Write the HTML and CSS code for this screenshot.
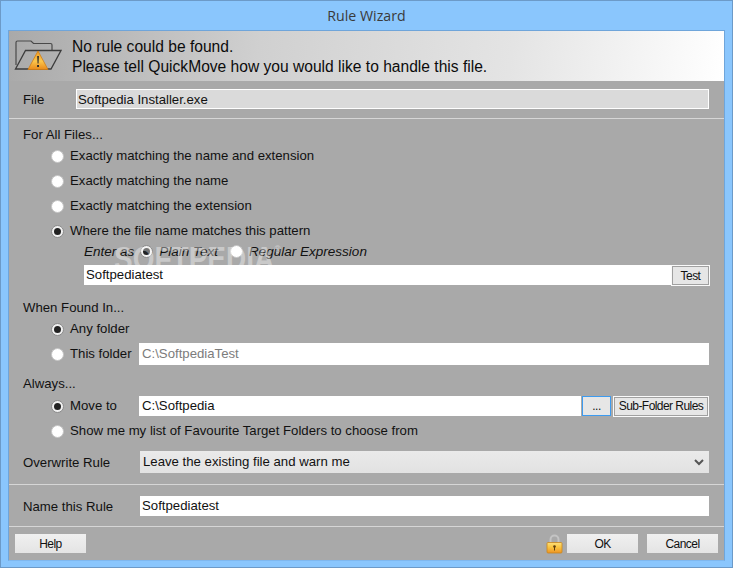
FILE: index.html
```html
<!DOCTYPE html>
<html lang="en">
<head>
<meta charset="utf-8">
<title>Rule Wizard</title>
<link rel="stylesheet" href="styles.css">
</head>
<body>
<div class="window">
  <div class="titlebar">Rule Wizard</div>
  <div class="client">
    <header class="banner">
      <svg class="folder" width="48" height="36" viewBox="0 0 48 36">
        <defs>
          <linearGradient id="warn" x1="0" y1="0" x2="0" y2="1">
            <stop offset="0" stop-color="#ee9a22"/>
            <stop offset=".55" stop-color="#fbc64c"/>
            <stop offset="1" stop-color="#e98a1c"/>
          </linearGradient>
        </defs>
        <path d="M2 27V4.500q0-1.500 1.500-1.500H17l2.500 2.500H36.500q1.500 0 1.500 1.500v5" fill="none" stroke="#4a4a4a" stroke-width="1.200"/>
        <path d="M1.500 31 11.500 12.500H47L37 31Z" fill="none" stroke="#3c3c3c" stroke-width="1.300"/>
        <path d="M24 13 34 31.500H14Z" fill="url(#warn)" stroke="#d07f16" stroke-width=".8"/>
        <path d="M23.200 18h1.700l-.4 7.500h-.9ZM23.100 27h1.900v2h-1.900Z" fill="#2a2a2a"/>
      </svg>
      <div class="banner-text">
        <div>No rule could be found.</div>
        <div>Please tell QuickMove how you would like to handle this file.</div>
      </div>
    </header>

    <section class="row file-row">
      <span class="label label-file">File</span>
      <div class="field field-ro grow">Softpedia Installer.exe</div>
    </section>
    <hr class="sep sep-file">

    <div class="heading heading-first">For All Files...</div>
    <div class="choice choice-a"><span class="radio"></span>Exactly matching the name and extension</div>
    <div class="choice choice-b"><span class="radio"></span>Exactly matching the name</div>
    <div class="choice choice-b"><span class="radio"></span>Exactly matching the extension</div>
    <div class="choice choice-b"><span class="radio on"></span>Where the file name matches this pattern</div>
    <div class="enter-as">
      <span class="em em-lead">Enter as</span>
      <span class="radio on"></span><span class="em em-plain">Plain Text</span>
      <span class="radio"></span><span class="em">Regular Expression</span>
    </div>
    <div class="pattern-row">
      <div class="field grow">Softpediatest</div>
      <div class="btn btn-test">Test</div>
    </div>

    <div class="heading heading-found">When Found In...</div>
    <div class="choice choice-c"><span class="radio on"></span>Any folder</div>
    <div class="choice choice-d">
      <span class="radio"></span><span class="inline-label">This folder</span>
      <div class="field field-dis grow">C:\SoftpediaTest</div>
    </div>

    <div class="heading heading-always">Always...</div>
    <div class="choice choice-e">
      <span class="radio on"></span><span class="inline-label">Move to</span>
      <div class="field field-move grow">C:\Softpedia</div>
      <div class="btn btn-dots">...</div>
      <div class="btn btn-sub">Sub-Folder Rules</div>
    </div>
    <div class="choice choice-f"><span class="radio"></span>Show me my list of Favourite Target Folders to choose from</div>

    <section class="row over-row">
      <span class="label label-wide">Overwrite Rule</span>
      <div class="select grow">Leave the existing file and warn me
        <svg class="chev" width="10" height="7" viewBox="0 0 10 7"><path d="M1 1l4 4 4-4" fill="none" stroke="#555" stroke-width="2"/></svg>
      </div>
    </section>
    <hr class="sep sep-over">
    <section class="row name-row">
      <span class="label label-wide">Name this Rule</span>
      <div class="field grow">Softpediatest</div>
    </section>
    <hr class="sep sep-name">

    <footer class="footer">
      <div class="btn btn-foot">Help</div>
      <div class="spacer"></div>
      <svg class="lock" width="17" height="20" viewBox="0 0 17 20">
        <defs>
          <linearGradient id="lockbody" x1="0" y1="0" x2="0" y2="1">
            <stop offset="0" stop-color="#fde07a"/>
            <stop offset=".45" stop-color="#f9c440"/>
            <stop offset="1" stop-color="#ee9322"/>
          </linearGradient>
        </defs>
        <path d="M4.500 9V5.500a4 4 0 0 1 8 0V9" fill="none" stroke="#c4c4c4" stroke-width="2"/>
        <rect x="1" y="8.500" width="15" height="10.500" rx="1" fill="url(#lockbody)" stroke="#c9851c" stroke-width=".8"/>
        <circle cx="8.500" cy="12.500" r="1.300" fill="#5d3d0d"/>
        <path d="M8 13h1v3.500H8Z" fill="#5d3d0d"/>
      </svg>
      <div class="btn btn-foot">OK</div>
      <div class="btn btn-foot btn-cancel">Cancel</div>
    </footer>
    <div class="watermark">SOFTPEDIA<span class="reg">®</span></div>
  </div>
</div>
</body>
</html>
```

FILE: styles.css
```css
* { box-sizing: border-box; }
html, body { margin: 0; height: 100%; }
body { font-family: "Liberation Sans", Arial, sans-serif; font-size: 13.2px; color: #111; overflow: hidden; }

.window { width: 733px; height: 568px; background: #8ac6fd; border: 1px solid #6c9ac8; padding: 0 7px 6px; display: flex; flex-direction: column; }
.titlebar { height: 29px; line-height: 29px; text-align: center; font-family: "Open Sans", "Liberation Sans", sans-serif; font-size: 14.2px; color: #3a3a3a; flex: none; }
.client { position: relative; flex: 1; background: #a9a9a9; border: 1px solid #6fa5da; border-bottom-color: #7fb7ee; overflow: hidden; }

.banner { height: 50px; display: flex; align-items: center; background: linear-gradient(98deg, #a9a9a9 0%, #d0d0d0 35%, #e4e4e4 70%, #ffffff 100%); padding-left: 5px; }
.folder { flex: none; margin-right: 10px; }
.banner-text { font-size: 15.6px; line-height: 20px; color: #0c0c0c; padding-top: 1px; }

.row { display: flex; align-items: center; padding: 0 15px 0 14px; }
.grow { flex: 1; min-width: 0; }
.label { flex: none; }
.label-file { width: 53px; }
.label-wide { width: 117px; }
.file-row { margin-top: 8px; height: 20px; }
.field { height: 20px; line-height: 20px; background: #fff; padding-left: 2px; white-space: nowrap; overflow: hidden; }
.field-ro { background: #dadada; border: 1px solid #fff; line-height: 19px; padding-left: 1px; }
.field-dis { color: #7c7c7c; height: 22px; line-height: 21px; padding-left: 3px; }
.field-move { padding-left: 3px; }

.sep { border: 0; height: 1px; background: #d6d6d6; margin: 0; }
.sep-file { margin-top: 9px; }

.heading { height: 16px; line-height: 16px; padding-left: 14px; }
.heading-first { margin-top: 8px; }
.heading-found { margin-top: 15px; }
.heading-always { margin-top: 11px; }

.choice { display: flex; align-items: center; height: 16px; line-height: 16px; padding-left: 42px; padding-right: 15px; }
.choice-a { margin-top: 5px; }
.choice-b { margin-top: 9px; }
.choice-c { margin-top: 5px; }
.choice-d { margin-top: 6px; height: 22px; }
.choice-e { margin-top: 4px; height: 20px; }
.choice-f { margin-top: 7px; }

.radio { flex: none; width: 13px; height: 13px; border-radius: 50%; background: #fff; border: 1px solid #c4c4c4; margin-right: 6px; position: relative; }
.radio.on { background: #f0f0f0; border-color: #8a8a8a; }
.radio.on::after { content: ""; position: absolute; left: 2px; top: 2px; width: 7px; height: 7px; border-radius: 50%; background: #222; }

.enter-as { display: flex; align-items: center; height: 16px; margin-top: 4px; padding-left: 75px; }
.em { font-style: italic; font-size: 13.5px; }
.em-lead { margin-right: 6px; }
.em-plain { margin-right: 12px; }

.pattern-row { display: flex; margin-top: 6px; height: 20px; padding: 0 15px 0 75px; }
.inline-label { flex: none; width: 69px; }

.btn { flex: none; display: flex; align-items: center; justify-content: center; height: 20px; font-size: 12px; letter-spacing: -.55px; background: linear-gradient(#f0f0f0, #e4e4e4); color: #111; }
.btn-test, .btn-sub { border: 1px solid #fafafa; outline: 1px solid #a0a0a0; outline-offset: -2px; background: #e6e6e6; }
.btn-test { width: 39px; margin-right: -1px; height: 21px; }
.btn-dots { width: 29px; margin-left: 1px; border: 1px solid #3d9bf0; background: #e6e6e6; align-items: flex-end; padding-bottom: 1px; }
.btn-sub { width: 96px; margin-left: 2px; height: 21px; }

.over-row { margin-top: 12px; height: 22px; }
.select { height: 22px; line-height: 22px; padding-left: 3px; padding-right: 3px; background: linear-gradient(#eaeaea, #e2e2e2); display: flex; justify-content: space-between; align-items: center; }
.chev { margin-right: 2px; }
.sep-over { margin-top: 11px; }
.name-row { margin-top: 11px; height: 20px; }
.sep-name { margin-top: 10px; }

.footer { display: flex; align-items: center; margin-top: 7px; padding: 0 6px; height: 19px; }
.spacer { flex: 1; }
.btn-foot { width: 71px; height: 19px; }
.btn-cancel { margin-left: 9px; }
.lock { flex: none; margin-right: 4px; }

.watermark { position: absolute; left: 105px; top: 204px; line-height: 30px; font-weight: 700; font-size: 28px; color: rgba(255,255,255,.38); pointer-events: none; transform: scaleY(1.2); }
.reg { font-size: 9px; font-weight: 400; vertical-align: 14px; }
```
